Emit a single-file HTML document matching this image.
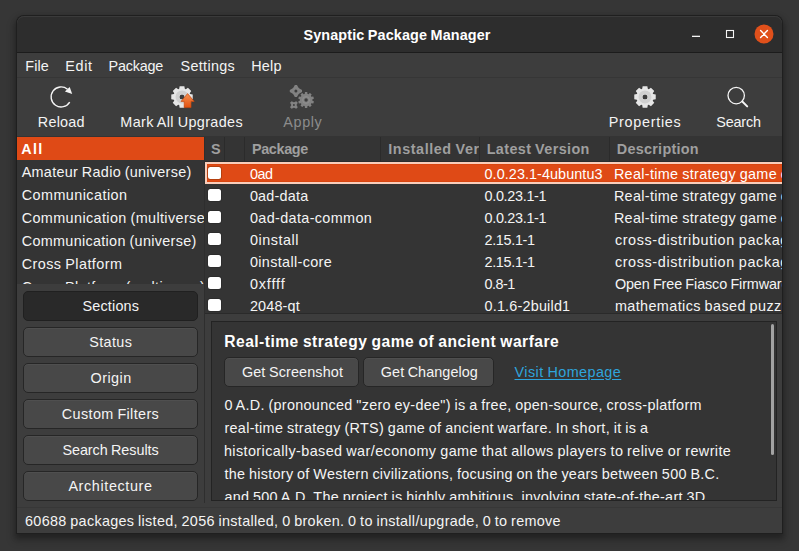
<!DOCTYPE html><html lang="en"><head><meta charset="utf-8"><title>Synaptic Package Manager</title><style>
*{box-sizing:border-box;margin:0;padding:0}
html,body{width:799px;height:551px;overflow:hidden;background:#363636}
body{position:relative;font-family:"Liberation Sans",sans-serif;font-size:14.4px;color:#f4f4f4;line-height:1;-webkit-font-smoothing:antialiased}
.abs,.t{position:absolute}
.t{white-space:pre;line-height:1;display:block;word-spacing:-.6px}
#shadow{left:17px;top:16px;width:765px;height:517px;border-radius:7px 7px 0 0;box-shadow:0 0 0 1px #1f1f1f,0 3px 5px 2px rgba(0,0,0,.2),0 5px 9px 3px rgba(0,0,0,.2)}
#win{left:17px;top:16px;width:765px;height:517px;border-radius:7px 7px 0 0;background:#3d3d3d;overflow:hidden}
#title{left:0;top:0;width:765px;height:37px;background:#2d2d2d;box-shadow:inset 0 1px #3a3a3a;border-bottom:1px solid #1c1c1c;border-radius:7px 7px 0 0}
#menubar{left:0;top:37px;width:765px;height:25px;border-bottom:1px solid #363636}
#toolbar{left:0;top:62px;width:765px;height:59px;border-bottom:1px solid #343434}
.view{background:#343434;overflow:hidden}
.btn{position:absolute;background:#484848;border:1px solid #262626;border-radius:5px;box-shadow:inset 0 1px rgba(255,255,255,.04)}
.btn.on{background:#292929;border-color:#202020;box-shadow:none}
.row{position:absolute;left:0;width:620px;height:22px}
.cb{position:absolute;left:3.4px;top:4.5px;width:13px;height:12.5px;background:#fff;border-radius:2.5px;box-shadow:0 0 0 1px #2d2d2d}
.sel{background:#df4a16;box-shadow:inset 0 0 0 2px #f9cdba,inset 0 0 0 3px #d9450f}
.sel .cb{box-shadow:0 0 0 1px #b5400f}
.colsep{position:absolute;top:0;width:1px;height:25px;background:#2b2b2b}
</style></head><body>
<div id="shadow" class="abs"></div>
<div id="win" class="abs">
<div id="title" class="abs">
<span class="t" style="left:286.50px;top:11.80px;letter-spacing:0.110px;color:#ffffff;font-weight:700;">Synaptic Package Manager</span>
<svg class="abs" style="left:660px;top:0;width:105px;height:36px" viewBox="677 16 105 36"><rect x="692" y="35.7" width="8" height="1.3" fill="#f4f4f4"/><rect x="726.5" y="30.5" width="7" height="7" fill="none" stroke="#f4f4f4" stroke-width="1.1"/><circle cx="764" cy="34" r="9.5" fill="#e0501b"/><path d="M760.6 30.6 L767.4 37.4 M767.4 30.6 L760.6 37.4" stroke="#fff" stroke-width="1.4" stroke-linecap="round"/></svg>
</div>
<div id="menubar" class="abs">
<span class="t" style="left:8.30px;top:5.80px;letter-spacing:0.105px;">File</span>
<span class="t" style="left:48.30px;top:5.80px;letter-spacing:0.634px;">Edit</span>
<span class="t" style="left:91.50px;top:5.80px;letter-spacing:-0.200px;">Package</span>
<span class="t" style="left:163.60px;top:5.80px;letter-spacing:0.300px;">Settings</span>
<span class="t" style="left:234.30px;top:5.80px;letter-spacing:0.169px;">Help</span>
</div>
<div id="toolbar" class="abs">
<svg class="abs" style="left:30px;top:6px;width:30px;height:26px" viewBox="47 84 30 26"><path d="M67.5 89.2 A10 10 0 1 0 69.7 102.05" fill="none" stroke="#f4f4f4" stroke-width="1.4"/><path d="M69.7 87.0 L72.2 93.9 L64.9 91.6 Z" fill="#f4f4f4"/></svg>
<span class="t" style="left:20.80px;top:36.60px;letter-spacing:0.220px;">Reload</span>
<svg class="abs" style="left:152px;top:6px;width:30px;height:26px" viewBox="169 84 30 26"><defs><linearGradient id="og" x1="0" y1="0" x2="0" y2="1"><stop offset="0" stop-color="#f59253"/><stop offset="1" stop-color="#e2500f"/></linearGradient></defs><path d="M190.13 94.08 L192.74 94.54 L192.74 99.26 L190.13 99.72 L189.74 100.65 L191.26 102.83 L187.93 106.16 L185.75 104.64 L184.82 105.03 L184.36 107.64 L179.64 107.64 L179.18 105.03 L178.25 104.64 L176.07 106.16 L172.74 102.83 L174.26 100.65 L173.87 99.72 L171.26 99.26 L171.26 94.54 L173.87 94.08 L174.26 93.15 L172.74 90.97 L176.07 87.64 L178.25 89.16 L179.18 88.77 L179.64 86.16 L184.36 86.16 L184.82 88.77 L185.75 89.16 L187.93 87.64 L191.26 90.97 L189.74 93.15Z M179.50 96.90 a2.50 2.50 0 1 0 5.00 0 a2.50 2.50 0 1 0 -5.00 0Z" fill="#e6e6e6" fill-rule="evenodd"/><circle cx="182" cy="96.9" r="4.6" fill="none" stroke="#d0d0d0" stroke-width="3.8"/><path d="M187.6 93.6 L194.2 101.4 L191 101.4 L191 107.6 L184.2 107.6 L184.2 101.4 L181 101.4 Z" fill="url(#og)" stroke="#c5470f" stroke-width=".7" stroke-linejoin="round"/></svg>
<span class="t" style="left:103.30px;top:36.60px;letter-spacing:0.377px;">Mark All Upgrades</span>
<svg class="abs" style="left:270px;top:5px;width:32px;height:28px" viewBox="287 83 32 28"><g fill="#828282" fill-rule="evenodd"><path d="M312.28 100.54 L313.98 101.38 L313.28 103.52 L311.42 103.19 L310.78 104.07 L311.67 105.75 L309.84 107.07 L308.53 105.71 L307.49 106.04 L307.23 107.92 L304.97 107.92 L304.71 106.04 L303.67 105.71 L302.36 107.07 L300.53 105.75 L301.42 104.07 L300.78 103.19 L298.92 103.52 L298.22 101.38 L299.92 100.54 L299.92 99.46 L298.22 98.62 L298.92 96.48 L300.78 96.81 L301.42 95.93 L300.53 94.25 L302.36 92.93 L303.67 94.29 L304.71 93.96 L304.97 92.08 L307.23 92.08 L307.49 93.96 L308.53 94.29 L309.84 92.93 L311.67 94.25 L310.78 95.93 L311.42 96.81 L313.28 96.48 L313.98 98.62 L312.28 99.46Z M304.40 100.00 a1.70 1.70 0 1 0 3.40 0 a1.70 1.70 0 1 0 -3.40 0Z"/><path d="M299.38 88.56 L302.01 89.93 L302.01 92.07 L299.38 93.44 L298.34 94.48 L296.97 97.11 L294.83 97.11 L293.46 94.48 L292.42 93.44 L289.79 92.07 L289.79 89.93 L292.42 88.56 L293.46 87.52 L294.83 84.89 L296.97 84.89 L298.34 87.52Z M294.40 91.00 a1.50 1.50 0 1 0 3.00 0 a1.50 1.50 0 1 0 -3.00 0Z"/><path d="M296.59 105.21 L297.77 107.29 L296.19 108.87 L294.11 107.69 L293.69 107.69 L291.61 108.87 L290.03 107.29 L291.21 105.21 L291.21 104.79 L290.03 102.71 L291.61 101.13 L293.69 102.31 L294.11 102.31 L296.19 101.13 L297.77 102.71 L296.59 104.79Z M292.90 105.00 a1.00 1.00 0 1 0 2.00 0 a1.00 1.00 0 1 0 -2.00 0Z"/></g><circle cx="306.1" cy="100" r="3.4" fill="none" stroke="#909090" stroke-width="1"/></svg>
<span class="t" style="left:266.30px;top:36.60px;letter-spacing:0.624px;color:#8c8c8c;">Apply</span>
<svg class="abs" style="left:615px;top:6px;width:30px;height:26px" viewBox="632 84 30 26"><path d="M653.13 94.08 L655.74 94.54 L655.74 99.26 L653.13 99.72 L652.74 100.65 L654.26 102.83 L650.93 106.16 L648.75 104.64 L647.82 105.03 L647.36 107.64 L642.64 107.64 L642.18 105.03 L641.25 104.64 L639.07 106.16 L635.74 102.83 L637.26 100.65 L636.87 99.72 L634.26 99.26 L634.26 94.54 L636.87 94.08 L637.26 93.15 L635.74 90.97 L639.07 87.64 L641.25 89.16 L642.18 88.77 L642.64 86.16 L647.36 86.16 L647.82 88.77 L648.75 89.16 L650.93 87.64 L654.26 90.97 L652.74 93.15Z M642.50 96.90 a2.50 2.50 0 1 0 5.00 0 a2.50 2.50 0 1 0 -5.00 0Z" fill="#e6e6e6" fill-rule="evenodd"/><circle cx="645" cy="96.9" r="4.6" fill="none" stroke="#d0d0d0" stroke-width="3.8"/></svg>
<span class="t" style="left:591.80px;top:36.60px;letter-spacing:0.701px;">Properties</span>
<svg class="abs" style="left:707px;top:6px;width:30px;height:26px" viewBox="724 84 30 26"><circle cx="736.2" cy="95.6" r="8.2" fill="none" stroke="#f4f4f4" stroke-width="1.3"/><path d="M742.3 101.5 L747.2 106.4" stroke="#f4f4f4" stroke-width="2" stroke-linecap="round"/></svg>
<span class="t" style="left:699.30px;top:36.60px;letter-spacing:-0.199px;">Search</span>
</div>
<div class="abs view" style="left:0;top:121px;width:187px;height:147px">
<div class="abs" style="left:0;top:0;width:187px;height:23px;background:#df4a16"></div>
<span class="t" style="left:4.30px;top:4.80px;letter-spacing:1.305px;color:#fff;font-weight:700;">All</span>
<span class="t" style="left:4.70px;top:27.80px;letter-spacing:0.297px;">Amateur Radio (universe)</span>
<span class="t" style="left:4.70px;top:50.80px;letter-spacing:0.444px;">Communication</span>
<span class="t" style="left:4.70px;top:73.80px;letter-spacing:0.386px;">Communication (multiverse)</span>
<span class="t" style="left:4.70px;top:96.80px;letter-spacing:0.315px;">Communication (universe)</span>
<span class="t" style="left:4.70px;top:119.80px;letter-spacing:0.441px;">Cross Platform</span>
<span class="t" style="left:4.70px;top:142.80px;letter-spacing:0.388px;">Cross Platform (multiverse)</span>
</div>
<div class="btn on" style="left:6px;top:275px;width:175px;height:30px">
<span class="t" style="left:58.40px;top:6.60px;letter-spacing:0.200px;">Sections</span>
</div>
<div class="btn" style="left:6px;top:311px;width:175px;height:30px">
<span class="t" style="left:65.30px;top:6.60px;letter-spacing:0.360px;">Status</span>
</div>
<div class="btn" style="left:6px;top:347px;width:175px;height:30px">
<span class="t" style="left:66.50px;top:6.60px;letter-spacing:0.463px;">Origin</span>
</div>
<div class="btn" style="left:6px;top:383px;width:175px;height:30px">
<span class="t" style="left:37.80px;top:6.60px;letter-spacing:0.373px;">Custom Filters</span>
</div>
<div class="btn" style="left:6px;top:419px;width:175px;height:30px">
<span class="t" style="left:38.40px;top:6.60px;letter-spacing:-0.053px;">Search Results</span>
</div>
<div class="btn" style="left:6px;top:455px;width:175px;height:30px">
<span class="t" style="left:44.40px;top:6.60px;letter-spacing:0.620px;">Architecture</span>
</div>
<div class="abs" style="left:187px;top:121px;width:1px;height:366px;background:#2e2e2e"></div>
<div class="abs view" style="left:188px;top:121px;width:577px;height:177px;border-bottom:1px solid #2a2a2a">
<div class="abs" style="left:0;top:0;width:577px;height:25px;border-bottom:1px solid #2c2c2c">
<div class="colsep" style="left:19px"></div>
<div class="colsep" style="left:39px"></div>
<div class="colsep" style="left:175px"></div>
<div class="colsep" style="left:274px"></div>
<div class="colsep" style="left:404px"></div>
<span class="t" style="left:5.90px;top:5.20px;letter-spacing:-1.300px;color:#9f9f9f;font-weight:700;">S</span>
<span class="t" style="left:47.00px;top:5.20px;letter-spacing:-0.367px;color:#9f9f9f;font-weight:700;">Package</span>
<div class="abs" style="left:176px;top:0;width:98px;height:24px;overflow:hidden">
<span class="t" style="left:7.30px;top:5.20px;letter-spacing:0.551px;color:#9f9f9f;font-weight:700;">Installed Version</span>
</div>
<span class="t" style="left:281.70px;top:5.20px;letter-spacing:0.378px;color:#9f9f9f;font-weight:700;">Latest Version</span>
<span class="t" style="left:411.80px;top:5.20px;letter-spacing:0.263px;color:#9f9f9f;font-weight:700;">Description</span>
</div>
<div class="row sel" style="top:25px"><i class="cb"></i>
<span class="t" style="left:44.90px;top:4.80px;letter-spacing:-0.503px;color:#fff;">0ad</span>
<span class="t" style="left:279.50px;top:4.80px;letter-spacing:0.074px;color:#fff;">0.0.23.1-4ubuntu3</span>
<span class="t" style="left:408.90px;top:4.80px;letter-spacing:0.329px;color:#fff;">Real-time strategy game of ancient warfare</span>
</div>
<div class="row" style="top:47px"><i class="cb"></i>
<span class="t" style="left:44.90px;top:4.80px;letter-spacing:0.213px;">0ad-data</span>
<span class="t" style="left:279.50px;top:4.80px;letter-spacing:-0.300px;">0.0.23.1-1</span>
<span class="t" style="left:408.90px;top:4.80px;letter-spacing:0.329px;">Real-time strategy game of ancient warfare (data files)</span>
</div>
<div class="row" style="top:69px"><i class="cb"></i>
<span class="t" style="left:44.90px;top:4.80px;letter-spacing:0.366px;">0ad-data-common</span>
<span class="t" style="left:279.50px;top:4.80px;letter-spacing:-0.300px;">0.0.23.1-1</span>
<span class="t" style="left:408.90px;top:4.80px;letter-spacing:0.329px;">Real-time strategy game of ancient warfare (common data files)</span>
</div>
<div class="row" style="top:91px"><i class="cb"></i>
<span class="t" style="left:44.90px;top:4.80px;letter-spacing:0.529px;">0install</span>
<span class="t" style="left:279.50px;top:4.80px;letter-spacing:-0.315px;">2.15.1-1</span>
<span class="t" style="left:409.90px;top:4.80px;letter-spacing:0.620px;">cross-distribution packaging system</span>
</div>
<div class="row" style="top:113px"><i class="cb"></i>
<span class="t" style="left:44.90px;top:4.80px;letter-spacing:0.352px;">0install-core</span>
<span class="t" style="left:279.50px;top:4.80px;letter-spacing:-0.315px;">2.15.1-1</span>
<span class="t" style="left:409.90px;top:4.80px;letter-spacing:0.620px;">cross-distribution packaging system (non-GUI parts)</span>
</div>
<div class="row" style="top:135px"><i class="cb"></i>
<span class="t" style="left:44.90px;top:4.80px;letter-spacing:0.877px;">0xffff</span>
<span class="t" style="left:279.50px;top:4.80px;letter-spacing:-0.524px;">0.8-1</span>
<span class="t" style="left:409.90px;top:4.80px;letter-spacing:-0.111px;">Open Free Fiasco Firmware Flasher</span>
</div>
<div class="row" style="top:157px"><i class="cb"></i>
<span class="t" style="left:44.90px;top:4.80px;letter-spacing:0.165px;">2048-qt</span>
<span class="t" style="left:279.50px;top:4.80px;letter-spacing:0.199px;">0.1.6-2build1</span>
<span class="t" style="left:409.90px;top:4.80px;letter-spacing:0.395px;">mathematics based puzzle game</span>
</div>
</div>
<div class="abs view" style="left:194px;top:305px;width:566px;height:180px;border:1px solid #232323">
<span class="t" style="left:12.30px;top:11.70px;font-size:15.60px;letter-spacing:0.471px;color:#fff;font-weight:700;">Real-time strategy game of ancient warfare</span>
<div class="btn" style="left:12px;top:35px;width:135px;height:30px">
<span class="t" style="left:16.90px;top:6.50px;letter-spacing:0.124px;">Get Screenshot</span>
</div>
<div class="btn" style="left:151px;top:35px;width:131px;height:30px">
<span class="t" style="left:16.80px;top:6.50px;letter-spacing:0.066px;">Get Changelog</span>
</div>
<span class="t" style="left:302.50px;top:42.50px;letter-spacing:0.429px;color:#2fa4dc;text-decoration:underline;text-underline-offset:2px;">Visit Homepage</span>
<span class="t" style="left:12.40px;top:75.80px;letter-spacing:0.298px;">0 A.D. (pronounced "zero ey-dee") is a free, open-source, cross-platform</span>
<span class="t" style="left:12.40px;top:98.80px;letter-spacing:0.318px;">real-time strategy (RTS) game of ancient warfare. In short, it is a</span>
<span class="t" style="left:11.90px;top:121.80px;letter-spacing:0.412px;">historically-based war/economy game that allows players to relive or rewrite</span>
<span class="t" style="left:12.40px;top:144.80px;letter-spacing:0.291px;">the history of Western civilizations, focusing on the years between 500 B.C.</span>
<span class="t" style="left:12.40px;top:167.80px;letter-spacing:0.290px;">and 500 A.D. The project is highly ambitious, involving state-of-the-art 3D</span>
<div class="abs" style="left:559px;top:2px;width:3px;height:131px;background:#a3a3a3;border-radius:2px"></div>
</div>
<div class="abs" style="left:0;top:491px;width:765px;height:1px;background:#373737"></div>
<span class="t" style="left:8.00px;top:497.50px;letter-spacing:0.311px;">60688 packages listed, 2056 installed, 0 broken. 0 to install/upgrade, 0 to remove</span>
</div>
</body></html>
